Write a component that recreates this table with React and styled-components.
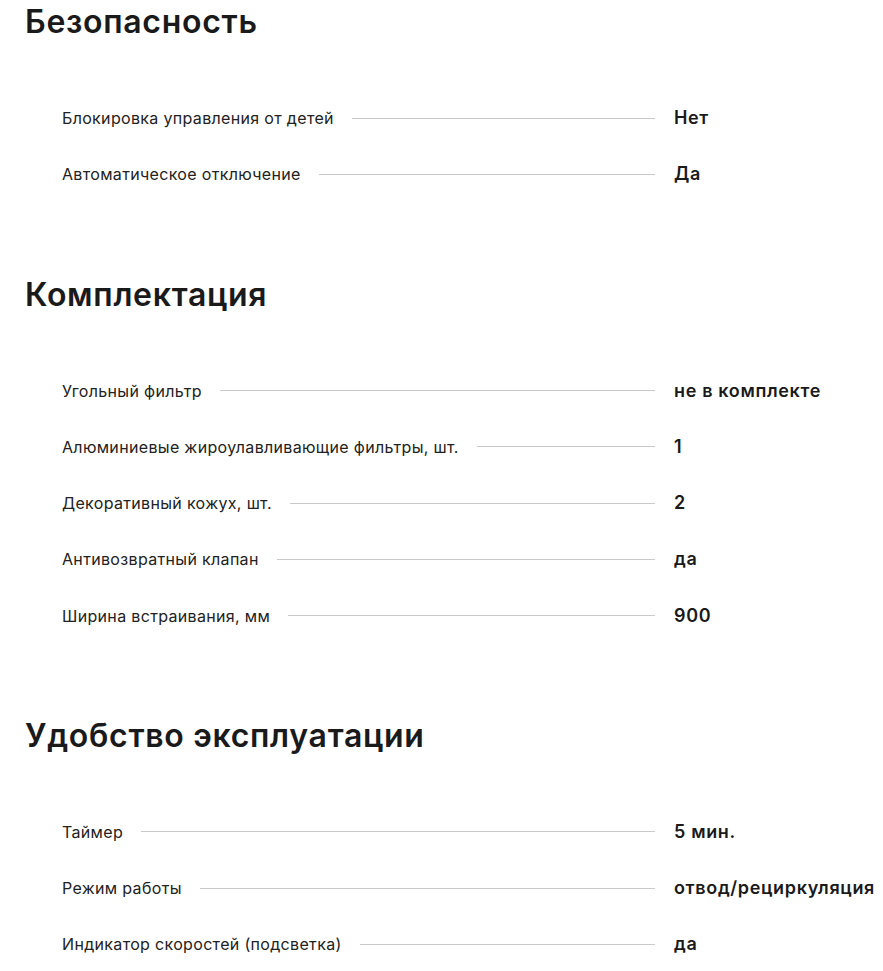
import React from "react";
import styled, { createGlobalStyle } from "styled-components";

const Global = createGlobalStyle`
  html, body { margin: 0; padding: 0; background: #fff; }
  body { font-family: Inter, "Noto Sans", sans-serif; color: #1c1c1c; }
`;

const Page = styled.div`
  width: 883px;
  padding: 2px 0 0 25px;
  box-sizing: border-box;
  display: flex;
  flex-direction: column;
  gap: 72px;
`;

const Section = styled.section`
  display: flex;
  flex-direction: column;
`;

const Heading = styled.h2`
  margin: 0 0 48px;
  font-size: 32px;
  line-height: 40px;
  font-weight: 600;
  color: #1a1a1a;
  letter-spacing: 0.7px;
`;

const List = styled.div`
  display: flex;
  flex-direction: column;
  padding-left: 37px;
`;

const Row = styled.div`
  height: 56.25px;
  display: flex;
  align-items: center;
`;

const Label = styled.span`
  font-size: 16px;
  line-height: 20px;
  color: #222;
  letter-spacing: 0.33px;
  white-space: nowrap;
`;

const Leader = styled.span`
  flex: 1;
  height: 1px;
  background: #c9c9c9;
  margin: 0 19px 0 18px;
`;

const Value = styled.span`
  width: 209px;
  flex-shrink: 0;
  font-size: 18px;
  line-height: 22px;
  font-weight: 600;
  color: #1a1a1a;
  letter-spacing: 0.65px;
  white-space: nowrap;
`;

const data = [
  {
    title: "Безопасность",
    rows: [
      ["Блокировка управления от детей", "Нет"],
      ["Автоматическое отключение", "Да"],
    ],
  },
  {
    title: "Комплектация",
    rows: [
      ["Угольный фильтр", "не в комплекте"],
      ["Алюминиевые жироулавливающие фильтры, шт.", "1"],
      ["Декоративный кожух, шт.", "2"],
      ["Антивозвратный клапан", "да"],
      ["Ширина встраивания, мм", "900"],
    ],
  },
  {
    title: "Удобство эксплуатации",
    rows: [
      ["Таймер", "5 мин."],
      ["Режим работы", "отвод/рециркуляция"],
      ["Индикатор скоростей (подсветка)", "да"],
    ],
  },
];

export default function App() {
  return (
    <>
      <Global />
      <Page>
        {data.map((s) => (
          <Section key={s.title}>
            <Heading>{s.title}</Heading>
            <List>
              {s.rows.map(([k, v]) => (
                <Row key={k}>
                  <Label>{k}</Label>
                  <Leader />
                  <Value>{v}</Value>
                </Row>
              ))}
            </List>
          </Section>
        ))}
      </Page>
    </>
  );
}
